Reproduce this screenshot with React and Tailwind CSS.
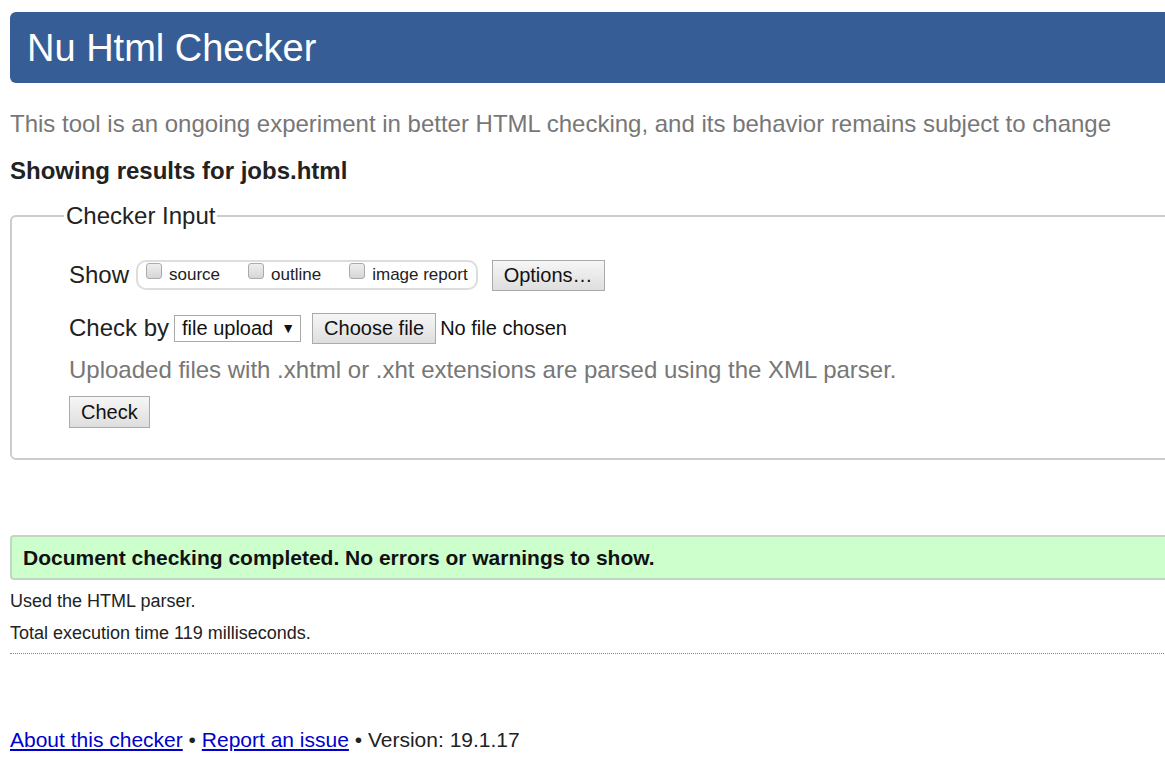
export default function App() {
  return (
    <div className="w-full overflow-hidden bg-white" style={{ fontFamily: '"Liberation Sans", Arial, sans-serif' }}>
      <div className="w-[1230px] pl-[10px] pt-[12px] pb-[20px]">
        {/* Header */}
        <div className="h-[71px] bg-[#365d95] rounded-l-[6px] flex items-center pl-[17px]">
          <h1 className="text-white text-[38px] leading-none">Nu Html Checker</h1>
        </div>

        <p className="mt-[26px] text-[#777] text-[24px] leading-tight">
          This tool is an ongoing experiment in better HTML checking, and its behavior remains subject to change
        </p>
        <h2 className="mt-[17px] text-[#222] text-[24px] font-bold leading-tight">Showing results for jobs.html</h2>

        {/* Checker Input */}
        <fieldset className="mt-[12px] border-2 border-[#ccc] rounded-l-[6px] pl-[52px] pr-4 pt-[23px] pb-[30px]">
          <legend className="px-[2px] text-[24px] text-[#222]">Checker Input</legend>

          <div className="pl-[5px]">
            <div className="flex items-center text-[#222]">
              <span className="text-[24px] mr-[7px]">Show</span>
              <div className="flex items-center h-[30px] border-2 border-[#ddd] rounded-[10px] pl-[8px] pr-[8px]">
                <label className="flex items-center gap-[7px] mr-[28px]">
                  <span className="w-[16px] h-[16px] -mt-[8px] rounded-[3px] border border-[#aaa] bg-gradient-to-b from-[#eee] to-[#d6d6d6]" />
                  <span className="text-[17px]">source</span>
                </label>
                <label className="flex items-center gap-[7px] mr-[28px]">
                  <span className="w-[16px] h-[16px] -mt-[8px] rounded-[3px] border border-[#aaa] bg-gradient-to-b from-[#eee] to-[#d6d6d6]" />
                  <span className="text-[17px]">outline</span>
                </label>
                <label className="flex items-center gap-[7px]">
                  <span className="w-[16px] h-[16px] -mt-[8px] rounded-[3px] border border-[#aaa] bg-gradient-to-b from-[#eee] to-[#d6d6d6]" />
                  <span className="text-[17px]">image report</span>
                </label>
              </div>
              <button className="ml-[14px] h-[31px] px-[11px] border border-[#aaa] bg-gradient-to-b from-[#f6f6f6] to-[#dedede] text-[20px] text-[#111] leading-none">
                Options…
              </button>
            </div>

            <div className="mt-[17px] flex items-center text-[#222]">
              <span className="text-[24px] mr-[5px]">Check by</span>
              <div className="h-[27px] border border-[#aaa] bg-white flex items-center pl-[7px] pr-[5px] text-[20px] text-[#111]">
                file upload <span className="ml-[8px] text-[14px]">▼</span>
              </div>
              <button className="ml-[11px] h-[31px] px-[11px] border border-[#aaa] bg-gradient-to-b from-[#f6f6f6] to-[#dedede] text-[20px] text-[#111] leading-none">
                Choose file
              </button>
              <span className="ml-[4px] text-[20px] text-[#111]">No file chosen</span>
            </div>

            <p className="mt-[9px] text-[24px] text-[#777] leading-tight">
              Uploaded files with .xhtml or .xht extensions are parsed using the XML parser.
            </p>

            <button className="mt-[11px] h-[32px] px-[11px] border border-[#aaa] bg-gradient-to-b from-[#f6f6f6] to-[#dedede] text-[20px] text-[#111] leading-none">
              Check
            </button>
          </div>
        </fieldset>

        {/* Result */}
        <div className="mt-[75px] h-[45px] bg-[#ccffcc] border-2 border-[#c2d6c2] rounded-l-[4px] flex items-center pl-[11px]">
          <span className="text-[21px] font-bold text-[#111]">Document checking completed. No errors or warnings to show.</span>
        </div>
        <p className="mt-[10px] text-[18px] text-[#222] leading-tight">Used the HTML parser.</p>
        <p className="mt-[9px] text-[18px] text-[#222] leading-tight">Total execution time 119 milliseconds.</p>
        <div className="mt-[9px] border-t border-dotted border-[#888]" />

        {/* Footer */}
        <p className="mt-[70px] text-[21px] text-[#222]">
          <a href="#" className="text-[#0000cc] underline">About this checker</a>
          {" • "}
          <a href="#" className="text-[#0000cc] underline">Report an issue</a>
          {" • Version: 19.1.17"}
        </p>
      </div>
    </div>
  );
}
